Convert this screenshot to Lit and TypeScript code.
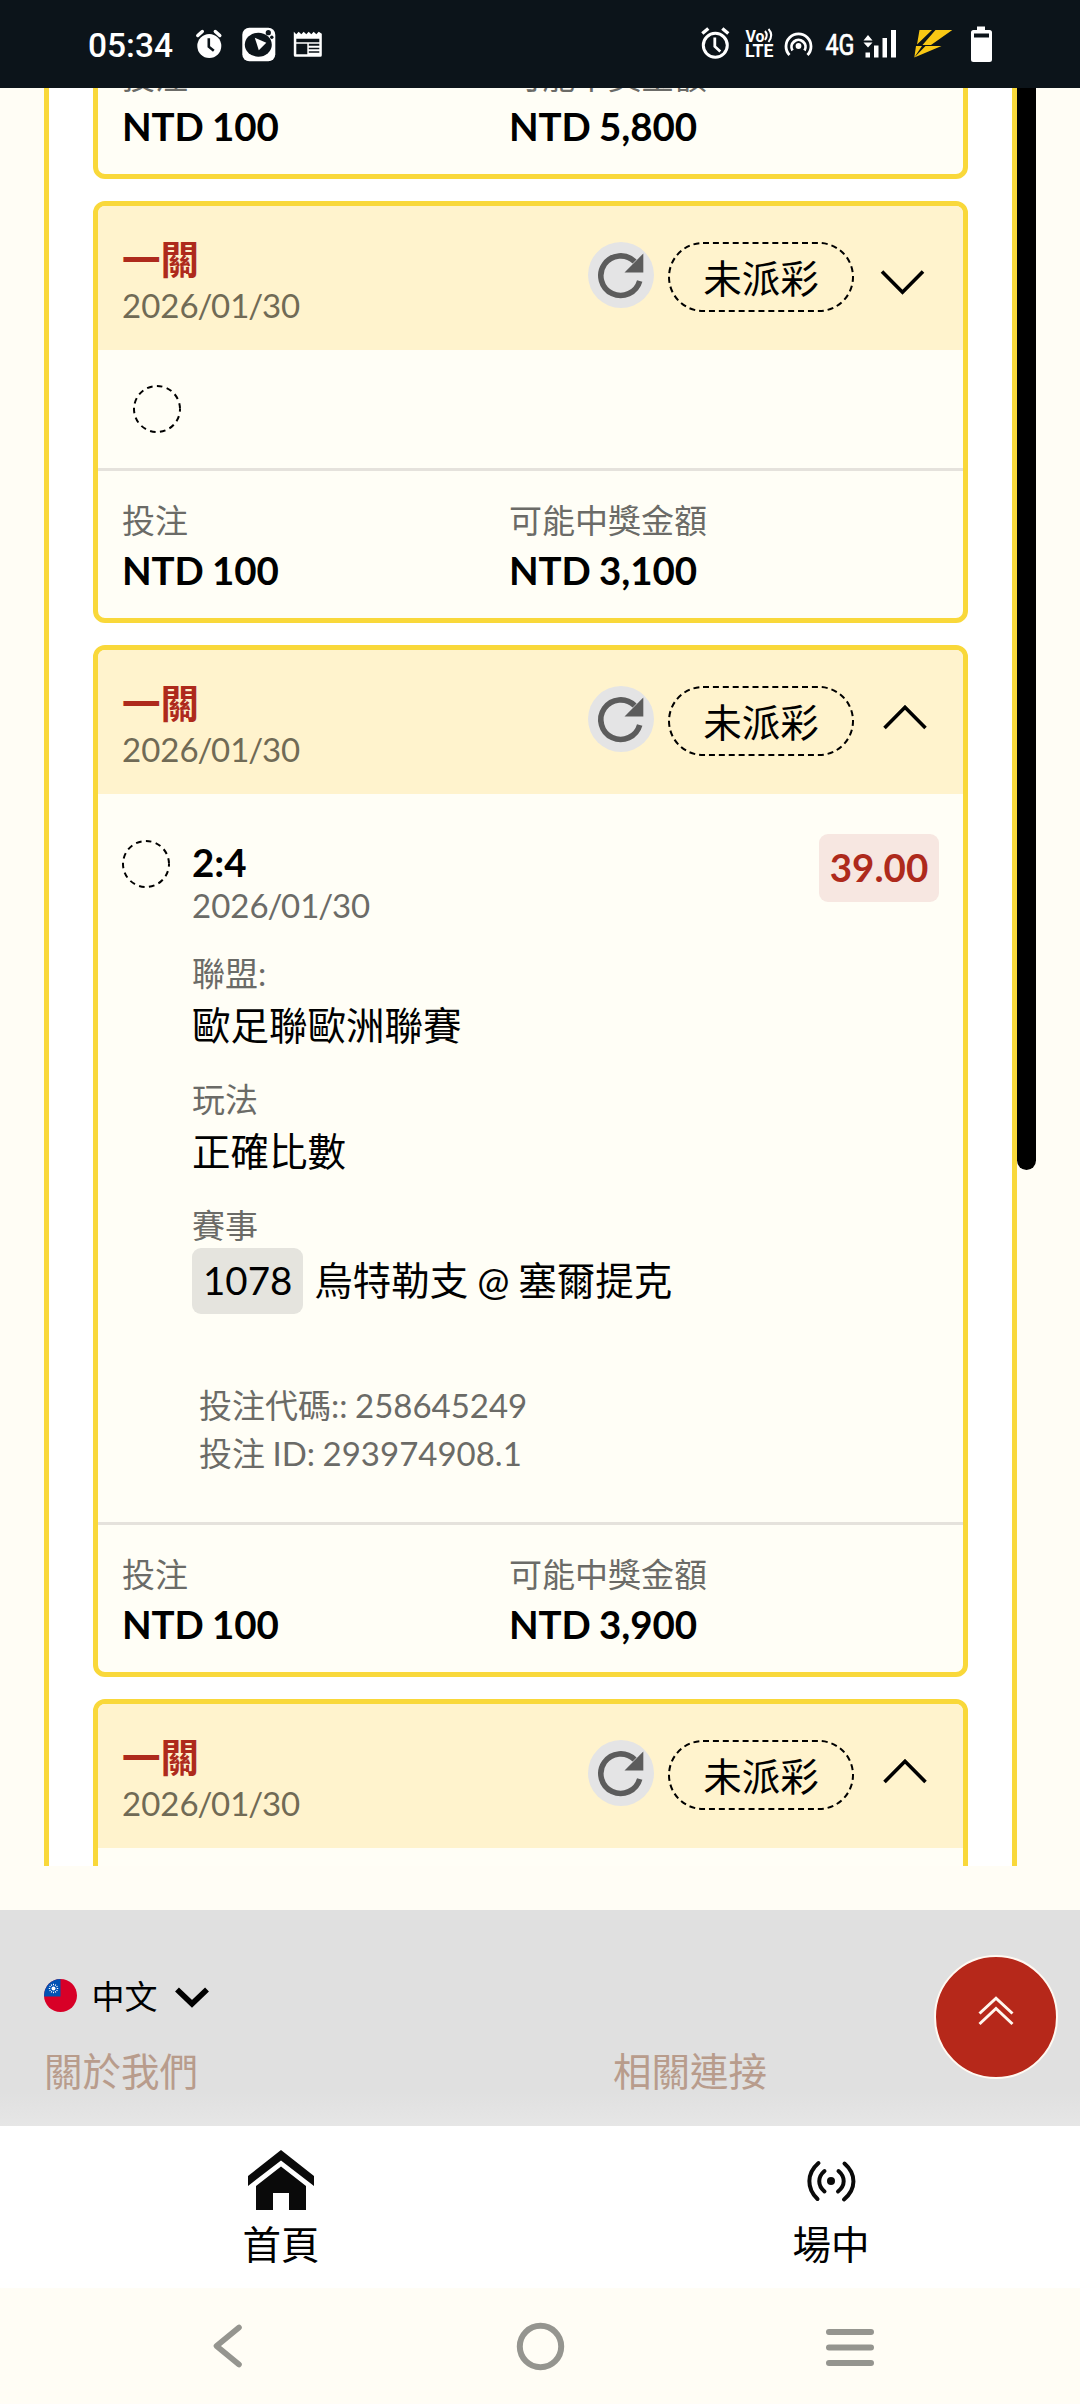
import { LitElement, html, css, svg, nothing } from "lit";
import { customElement, property } from "lit/decorators.js";

interface Detail {
  pick: string;
  date: string;
  odds: string;
  league: string;
  market: string;
  matchNo: string;
  match: string;
  code: string;
  id: string;
}

interface Bet {
  title?: string;
  date?: string;
  open?: boolean;
  stake: string;
  win: string;
  detail?: Detail;
}

const bets: Bet[] = [
  { stake: "NTD 100", win: "NTD 5,800" },
  { title: "一關", date: "2026/01/30", stake: "NTD 100", win: "NTD 3,100" },
  {
    title: "一關",
    date: "2026/01/30",
    open: true,
    stake: "NTD 100",
    win: "NTD 3,900",
    detail: {
      pick: "2:4",
      date: "2026/01/30",
      odds: "39.00",
      league: "歐足聯歐洲聯賽",
      market: "正確比數",
      matchNo: "1078",
      match: "烏特勒支 @ 塞爾提克",
      code: "258645249",
      id: "293974908.1",
    },
  },
  { title: "一關", date: "2026/01/30", open: true, stake: "", win: "" },
];

@customElement("bet-card")
export class BetCard extends LitElement {
  @property({ attribute: false }) bet!: Bet;

  static styles = css`
    :host {
      display: block;
      box-sizing: border-box;
      flex: none;
      border: 5px solid #f9d83a;
      border-radius: 12px;
      background: #fffef6;
      overflow: hidden;
      word-spacing: -0.06em;
    }
    .head {
      display: flex;
      align-items: flex-start;
      box-sizing: border-box;
      height: 144px;
      padding: 0 35px 0 24px;
      background: #fff3cd;
    }
    .names {
      flex: 1;
      padding-top: 30px;
    }
    .title {
      font-size: 38.5px;
      line-height: 46px;
      font-weight: 700;
      color: #ae2a1c;
    }
    .date {
      padding-top: 1px;
      font-size: 33px;
      line-height: 44px;
      color: #706a55;
    }
    .slash {
      margin: 0 -1.2px;
    }
    .actions {
      display: flex;
      padding-top: 36px;
    }
    .refresh {
      width: 66px;
      height: 66px;
      border-radius: 50%;
      background: #e4e4e5;
      margin-right: 14px;
    }
    .pill {
      box-sizing: border-box;
      width: 186px;
      height: 70px;
      margin-right: 26px;
    }
    .pill-box {
      display: grid;
    }
    .pill-box > * {
      grid-area: 1 / 1;
    }
    .pill-text {
      width: 186px;
      text-align: center;
      font-size: 38.5px;
      line-height: 72px;
      color: #000;
    }
    .brief {
      box-sizing: border-box;
      height: 118px;
      padding: 35px 0 0 35px;
    }
    .detail {
      display: flex;
      box-sizing: border-box;
      height: 728px;
      padding: 46px 24px 0;
      gap: 22px;
    }
    svg {
      display: block;
      flex: none;
    }
    .info {
      flex: 1;
    }
    .pick {
      font-size: 38.5px;
      line-height: 45px;
      margin-bottom: -2px;
      font-weight: 700;
    }
    .muted {
      font-size: 33px;
      line-height: 44px;
      color: #6b6b67;
    }
    .group {
      margin-top: 22px;
    }
    .group.first {
      margin-top: 24px;
    }
    .value {
      font-size: 38.5px;
      line-height: 60px;
      color: #000;
    }
    .match {
      display: flex;
      gap: 11px;
      margin-top: 1px;
      font-size: 38.5px;
      line-height: 65px;
    }
    .chip {
      height: 66px;
      padding: 0 11px;
      border-radius: 9px;
      background: #e5e4de;
    }
    .codes {
      margin-top: 67px;
      padding-left: 7px;
    }
    .codes .muted {
      line-height: 48px;
    }
    .odds {
      box-sizing: border-box;
      width: 120px;
      height: 68px;
      margin-top: -6px;
      border-radius: 9px;
      background: #f7e7e1;
      color: #ae2a1c;
      text-align: center;
      font-size: 38.5px;
      line-height: 66px;
      font-weight: 700;
    }
    .stake {
      display: flex;
      box-sizing: border-box;
      height: 150px;
      padding: 26px 0 0 24px;
      border-top: 3px solid #e5e2dc;
    }
    .stake > * {
      width: 387px;
      flex: none;
    }
    .stake .muted {
      line-height: 46px;
    }
    .amount {
      padding-top: 1px;
      font-size: 38.5px;
      line-height: 52px;
      letter-spacing: -0.1px;
      font-weight: 700;
      color: #000;
    }
    .tail {
      height: 200px;
    }
  `;

  private ring() {
    return html`<svg width="48" height="48" viewBox="0 0 48 48">
      <circle cx="24" cy="24" r="23" fill="none" stroke="#000" stroke-width="2"
        stroke-dasharray="5.6 4.434" stroke-dashoffset="2.8" />
    </svg>`;
  }

  private dateText(date: string) {
    return date.split("/").map((part, i) => (i ? html`<span class="slash">/</span>${part}` : part));
  }

  private header(b: Bet) {
    return html`<div class="head">
      <div class="names">
        <div class="title">${b.title}</div>
        <div class="date">${this.dateText(b.date ?? "")}</div>
      </div>
      <div class="actions">
        <div class="refresh">
          <svg width="66" height="66" viewBox="0 0 66 66">
            <path d="M51.7 39 A19.8 19.8 0 1 1 46.6 19.6" fill="none" stroke="#5c5c5c" stroke-width="5.6" />
            <path d="M55.3 11.5V30.5H36.5Z" fill="#5c5c5c" />
          </svg>
        </div>
        <div class="pill-box">
          <svg class="pill" viewBox="0 0 186 70">
            <rect x="1" y="1" width="184" height="68" rx="34" fill="none" stroke="#000"
              stroke-width="2" stroke-dasharray="6 3.9" />
          </svg>
          <div class="pill-text">未派彩</div>
        </div>
        <svg width="48" height="70" viewBox="0 0 48 70">
          <path d=${b.open ? "M4.500 42L25 21.300L45.500 42" : "M2 29.500L22.500 50.300L43 29.500"}
            fill="none" stroke="#000" stroke-width="3.6" />
        </svg>
      </div>
    </div>`;
  }

  private detail(d: Detail) {
    return html`<div class="detail">
      ${this.ring()}
      <div class="info">
        <div class="pick">${d.pick}</div>
        <div class="muted">${this.dateText(d.date)}</div>
        <div class="group first">
          <div class="muted">聯盟:</div>
          <div class="value">${d.league}</div>
        </div>
        <div class="group">
          <div class="muted">玩法</div>
          <div class="value">${d.market}</div>
        </div>
        <div class="group">
          <div class="muted">賽事</div>
          <div class="match"><span class="chip">${d.matchNo}</span><span>${d.match}</span></div>
        </div>
        <div class="codes">
          <div class="muted">投注代碼:: ${d.code}</div>
          <div class="muted">投注 ID: ${d.id}</div>
        </div>
      </div>
      <div class="odds">${d.odds}</div>
    </div>`;
  }

  render() {
    const b = this.bet;
    return html`
      ${b.title ? this.header(b) : nothing}
      ${b.detail ? this.detail(b.detail) : b.title && !b.open ? html`<div class="brief">${this.ring()}</div>` : nothing}
      ${b.stake
        ? html`<div class="stake">
            <div><div class="muted">投注</div><div class="amount">${b.stake}</div></div>
            <div><div class="muted">可能中獎金額</div><div class="amount">${b.win}</div></div>
          </div>`
        : html`<div class="tail"></div>`}
    `;
  }
}

const flagRays = Array.from({ length: 12 }, (_, i) => i * 30);

@customElement("app-root")
export class AppRoot extends LitElement {
  static styles = css`
    :host {
      display: flex;
      flex-direction: column;
      width: 1080px;
      height: 2404px;
      overflow: hidden;
      background: #fffdf5;
      color: #000;
      font-family: Lato, "Noto Sans CJK TC", sans-serif;
      position: relative;
    }
    svg {
      display: block;
      flex: none;
    }
    .status {
      flex: none;
      display: flex;
      align-items: center;
      box-sizing: border-box;
      height: 88px;
      padding-left: 88px;
      background: #0c141a;
      color: #fff;
      font-family: Roboto, sans-serif;
    }
    .time {
      width: 104px;
      padding-top: 3px;
      font-size: 33.5px;
      line-height: 40px;
      font-weight: 500;
    }
    .icons-left {
      width: 508px;
    }
    .scroller {
      flex: none;
      display: flex;
      height: 1778px;
      padding-left: 44px;
      overflow: hidden;
    }
    .panel {
      display: flex;
      flex-direction: column;
      gap: 22px;
      box-sizing: border-box;
      width: 973px;
      padding: 0 44px;
      border: solid #f9d83a;
      border-width: 0 5px;
      background: #fff;
    }
    .first {
      margin-top: -69px;
    }
    .bar {
      width: 19px;
      height: 1082px;
      background: #000;
      border-radius: 0 0 9.5px 9.5px;
    }
    .footer {
      flex: none;
      box-sizing: border-box;
      height: 216px;
      margin-top: 44px;
      padding: 64px 44px 0;
      background: linear-gradient(#e0e0e0 0 183px, #e6e6e6 216px);
    }
    .lang {
      display: flex;
      align-items: center;
      height: 44px;
      font-size: 33px;
      line-height: 44px;
    }
    .lang-name {
      width: 82px;
      padding-left: 14.5px;
    }
    .links {
      display: flex;
      margin-top: 27px;
      font-size: 38.5px;
      line-height: 52px;
      color: #b89c8c;
    }
    .links > * {
      width: 569px;
      flex: none;
    }
    .fab {
      position: absolute;
      left: 934px;
      top: 1955px;
      box-sizing: border-box;
      width: 124px;
      height: 124px;
      border: 2px solid #fff9f2;
      border-radius: 50%;
      background: #b6281a;
    }
    .tabs {
      flex: none;
      display: grid;
      grid-template-columns: 550px 550px;
      box-sizing: border-box;
      height: 162px;
      padding: 22px 0 0 6px;
      background: #fff;
    }
    .tab {
      display: flex;
      flex-direction: column;
      align-items: center;
      font-size: 38.5px;
      line-height: 52px;
    }
    .tab-text {
      margin-top: 4px;
    }
    .system {
      flex: 1;
      display: flex;
      align-items: center;
      padding-left: 210px;
      padding-bottom: 1px;
    }
  `;

  private leftIcons() {
    return svg`<g transform="translate(0.300 1.700)">
      <path d="M5.500 9.800L10 5.800M27.500 9.800L23 5.800" fill="none" stroke="#fff" stroke-width="3.400" stroke-linecap="round" />
      <circle cx="17" cy="20.300" r="12" fill="#fff" />
      <path d="M16.500 12.500V21L21.500 25" fill="none" stroke="#0c141a" stroke-width="2.600" />
      <rect x="50" y="2" width="33" height="33.500" rx="7" fill="#fff" />
      <ellipse cx="66" cy="19" rx="13.500" ry="12" fill="#0c141a" />
      <path d="M62.500 12L74 17L66.500 24.500Z" fill="#fff" />
      <circle cx="76" cy="7" r="2.600" fill="#0c141a" />
      <circle cx="79.500" cy="11.500" r="1.700" fill="#0c141a" />
      <path fill="#fff" fill-rule="evenodd" d="M101.500 6L104 8.500L106.400 6L109 8.500L111.400 6L114 8.500L116.400 6L119 8.500L121.400 6L124 8.500L126.400 6L129.500 8V29.500Q129.500 31 128 31H103Q101.500 31 101.500 29.500ZM104 13V16.500H127V13ZM104 18V28.500H115V18ZM116.500 18V20H127V18ZM116.500 22V23.500H127V22ZM116.500 25.500V27H127V25.500Z" />
    </g>`;
  }

  private rightIcons() {
    return svg`
      <g fill="none" stroke="#fff" stroke-width="3">
        <circle cx="15.300" cy="21.300" r="12" />
        <path d="M14.800 13.500V22.500L20.300 27.500" stroke-width="2.800" />
        <path d="M2.300 9.500L8.300 4.500M28.300 9.500L22.300 4.500" stroke-width="3.400" />
      </g>
      <g fill="#fff" font-family="Roboto, sans-serif" font-weight="700">
        <text x="45.500" y="18" font-size="16.500" textLength="19" lengthAdjust="spacingAndGlyphs">Vo</text>
        <text x="45" y="33.400" font-size="17.500" textLength="28.500" lengthAdjust="spacingAndGlyphs">LTE</text>
      </g>
      <path d="M65 7Q68.500 11 65 16M68.500 5Q74 11 68.500 18" fill="none" stroke="#fff" stroke-width="2" />
      <g fill="none" stroke="#fff" stroke-width="2.800">
        <path d="M89.500 31A12.500 12.500 0 1 1 107.500 31" />
        <path d="M92.500 26.500A7 7 0 1 1 104.500 26.500" />
      </g>
      <circle cx="98.500" cy="22" r="2.900" fill="#fff" />
      <text x="125.500" y="30.700" font-family="Roboto, sans-serif" font-size="29" fill="#fff" stroke="#fff" stroke-width="0.700" textLength="29" lengthAdjust="spacingAndGlyphs">4G</text>
      <path fill="#fff" d="M168 11L172.500 16.500H163.500ZM168 23.500L172.500 18.500H163.500ZM165.500 28.500H170V33.500H165.500ZM174 21.500H178.500V33.500H174ZM182.500 14H187V33.500H182.500ZM191 6H196V33.500H191Z" />
      <path fill="#f9c814" d="M219.500 6H232L217 20.500ZM235.500 6H252.300L231 21H222.500ZM216 22H222L214.300 33.500ZM225.500 22H241.500L214.300 33.500Z" />
      <path fill="#fff" fill-rule="evenodd" d="M277 2.500H285V6H289.500Q292 6 292 8.500V35.500Q292 38 289.500 38H273.500Q271 38 271 35.500V8.500Q271 6 273.500 6H277ZM274 9.500V13.500H289V9.500Z" />
    `;
  }

  render() {
    return html`
      <div class="status">
        <div class="time">05:34</div>
        <div class="icons-left">
          <svg width="140" height="40" viewBox="0 0 140 40">${this.leftIcons()}</svg>
        </div>
        <svg width="300" height="40" viewBox="0 0 300 40">${this.rightIcons()}</svg>
      </div>

      <div class="scroller">
        <div class="panel">
          ${bets.map((b, i) => html`<bet-card class=${i === 0 ? "first" : ""} .bet=${b}></bet-card>`)}
        </div>
        <div class="bar"></div>
      </div>

      <div class="footer">
        <div class="lang">
          <svg width="33" height="44" viewBox="0 0 33 44">
            <defs><clipPath id="disc"><circle cx="16.500" cy="21.500" r="16.500" /></clipPath></defs>
            <g clip-path="url(#disc)">
              <rect width="33" height="44" fill="#d80027" />
              <rect width="16.500" height="22.500" fill="#0052b4" />
            </g>
            <circle cx="9.500" cy="14.500" r="2" fill="#fff" />
            ${flagRays.map((a) => svg`<path d="M9.500 11.200V9.800" stroke="#fff" stroke-width="1" transform="rotate(${a} 9.500 14.500)" />`)}
          </svg>
          <span class="lang-name">中文</span>
          <svg width="36" height="44" viewBox="0 0 36 44">
            <path d="M3 15.500L18 29.800L33 15.500" fill="none" stroke="#000" stroke-width="5.600" />
          </svg>
        </div>
        <div class="links"><div>關於我們</div><div>相關連接</div></div>
      </div>

      <div class="tabs">
        <div class="tab">
          <svg width="66" height="66" viewBox="0 0 66 66" fill="#0a0a0a">
            <path d="M33 2L66 28V38L33 12.500L0 38V28Z" />
            <path d="M33 18.500L58 38V62H41V45H25V62H8V38Z" />
          </svg>
          <div class="tab-text">首頁</div>
        </div>
        <div class="tab">
          <svg width="66" height="66" viewBox="0 0 66 66" fill="none" stroke="#0a0a0a" stroke-width="4" stroke-linecap="round">
            <path d="M20.500 15C8.500 25.500 8.500 40.500 19.500 51M46.500 15.500C58.500 26 58.500 41 46 51.500" />
            <path d="M26.500 23C19.500 29 19.500 37.500 26.500 43.500M40.500 23C47.500 29 47.500 37.500 40 43.500" />
            <circle cx="33" cy="33" r="4" fill="#0a0a0a" stroke="none" />
          </svg>
          <div class="tab-text">場中</div>
        </div>
      </div>

      <div class="system">
        <svg width="670" height="60" viewBox="0 0 670 60" fill="none" stroke="#95958f" stroke-width="5.600" stroke-linecap="round" stroke-linejoin="round">
          <path d="M29 11.500L6.500 30L29 48.500" />
          <circle cx="330.500" cy="30.500" r="20.700" stroke-width="6" />
          <path d="M619 16H661M619 31.500H661M619 47H661" stroke-width="6" />
        </svg>
      </div>

      <div class="fab">
        <svg width="120" height="120" viewBox="0 0 120 120" fill="none" stroke="#fff6ee" stroke-width="3">
          <path d="M43.500 56.500L60 41.200L76.500 56.500M43.500 67L60 51.500L76.500 67" />
        </svg>
      </div>
    `;
  }
}
